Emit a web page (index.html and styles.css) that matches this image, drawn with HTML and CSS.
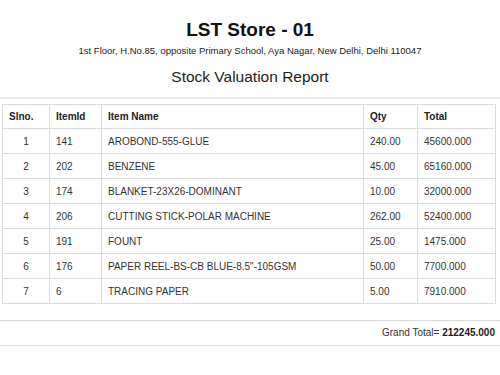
FILE: index.html
```html
<!DOCTYPE html>
<html>
<head>
<meta charset="utf-8">
<link rel="stylesheet" href="styles.css">
</head>
<body>
<header class="head">
  <h1 class="store">LST Store - 01</h1>
  <p class="addr">1st Floor, H.No.85, opposite Primary School, Aya Nagar, New Delhi, Delhi 110047</p>
  <h2 class="report">Stock Valuation Report</h2>
</header>
<div class="rule"></div>
<table class="stock">
  <colgroup>
    <col class="c1"><col class="c2"><col class="c3"><col class="c4"><col class="c5">
  </colgroup>
  <thead>
    <tr><th>Slno.</th><th>ItemId</th><th>Item Name</th><th>Qty</th><th>Total</th></tr>
  </thead>
  <tbody>
    <tr><td class="sl">1</td><td>141</td><td>AROBOND-555-GLUE</td><td>240.00</td><td>45600.000</td></tr>
    <tr><td class="sl">2</td><td>202</td><td>BENZENE</td><td>45.00</td><td>65160.000</td></tr>
    <tr><td class="sl">3</td><td>174</td><td>BLANKET-23X26-DOMINANT</td><td>10.00</td><td>32000.000</td></tr>
    <tr><td class="sl">4</td><td>206</td><td>CUTTING STICK-POLAR MACHINE</td><td>262.00</td><td>52400.000</td></tr>
    <tr><td class="sl">5</td><td>191</td><td>FOUNT</td><td>25.00</td><td>1475.000</td></tr>
    <tr><td class="sl">6</td><td>176</td><td>PAPER REEL-BS-CB BLUE-8.5"-105GSM</td><td>50.00</td><td>7700.000</td></tr>
    <tr><td class="sl">7</td><td>6</td><td>TRACING PAPER</td><td>5.00</td><td>7910.000</td></tr>
  </tbody>
</table>
<div class="grand">Grand Total= <b>212245.000</b></div>
</body>
</html>
```
FILE: styles.css
```css
html, body {
  margin: 0;
  padding: 0;
  background: #fff;
}
body {
  font-family: "Liberation Sans", Arial, sans-serif;
  color: #333;
  width: 500px;
}
.head {
  padding-top: 19px;
  text-align: center;
}
.store {
  margin: 0;
  font-size: 19px;
  line-height: 22px;
  font-weight: bold;
  color: #111;
}
.addr {
  margin: 4px 0 0;
  font-size: 9.5px;
  line-height: 12px;
  color: #222;
}
.report {
  margin: 11px 0 0;
  font-size: 15.5px;
  line-height: 18px;
  font-weight: normal;
  color: #222;
}
.rule {
  margin-top: 11px;
  height: 2px;
  background: #ececec;
}
.stock {
  margin: 5px 0 0 2px;
  width: 493px;
  border-collapse: collapse;
  table-layout: fixed;
  font-size: 10px;
}
.c1 { width: 47px; }
.c2 { width: 52px; }
.c3 { width: 262px; }
.c4 { width: 54px; }
.c5 { width: 78px; }
.stock th, .stock td {
  border: 1px solid #dcdcdc;
  text-align: left;
  padding: 0 6px;
  white-space: nowrap;
}
.stock th {
  height: 23px;
  font-weight: bold;
  color: #222;
}
.stock td {
  height: 24px;
}
.stock td.sl {
  text-align: center;
}
.grand {
  margin-top: 16px;
  border-top: 1px solid #dcdcdc;
  border-bottom: 1px solid #dcdcdc;
  height: 24px;
  line-height: 24px;
  text-align: right;
  padding-right: 5px;
  font-size: 10px;
}
.grand b {
  color: #222;
}
```
